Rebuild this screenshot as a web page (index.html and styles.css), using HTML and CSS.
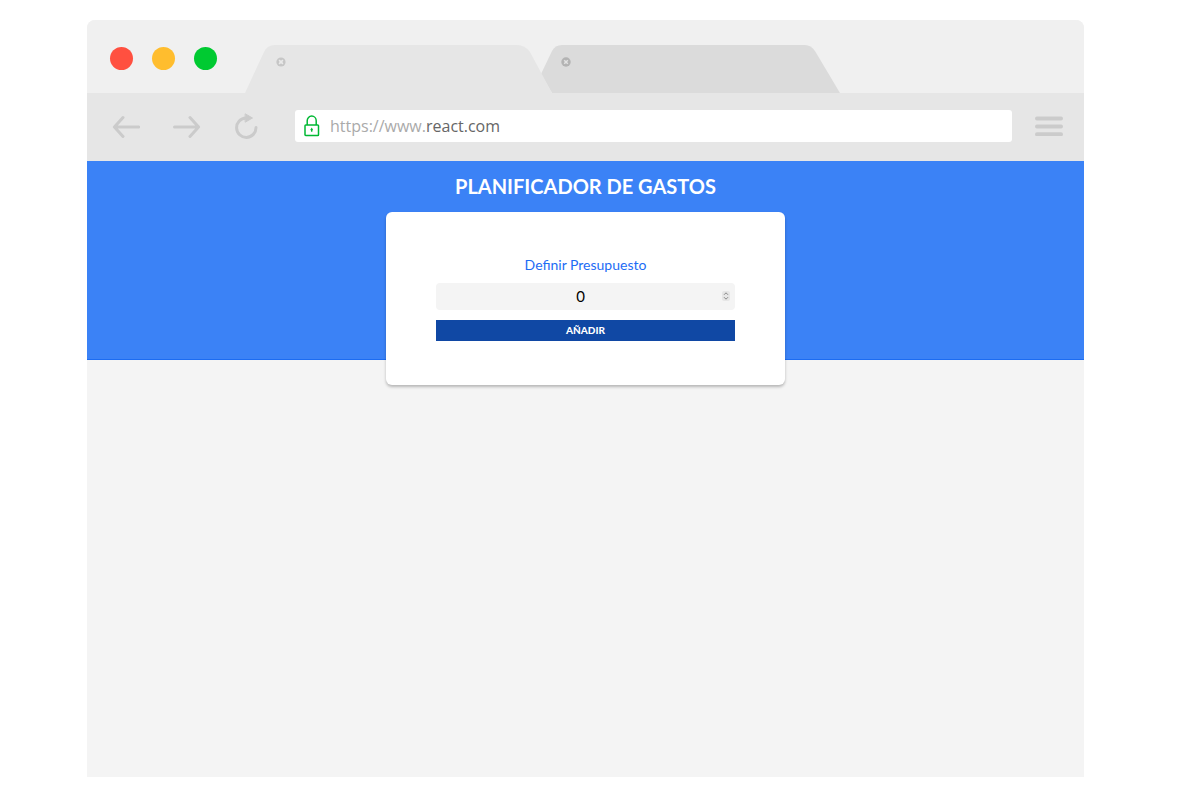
FILE: index.html
```html
<!DOCTYPE html>
<html lang="es">
<head>
<meta charset="utf-8">
<meta name="viewport" content="width=device-width, initial-scale=1">
<title>Planificador de Gastos</title>
<link rel="stylesheet" href="styles.css">
</head>
<body>
<div class="window">
  <div class="titlebar">
    <div class="lights">
      <span class="light light-close"></span>
      <span class="light light-min"></span>
      <span class="light light-max"></span>
    </div>
    <div class="tabs">
      <div class="tab tab-active">
        <svg class="tab-shape" viewBox="0 0 307 48" preserveAspectRatio="none" aria-hidden="true"><path d="M0 48 L19 7 Q22 0 30 0 H272 Q280 0 285 7 L307 48Z"/></svg>
        <button class="tab-close" type="button" aria-label="Cerrar">
          <svg width="10" height="10" viewBox="0 0 10 10" aria-hidden="true"><circle cx="5" cy="5" r="4.6" fill="#c6c6c6"/><path d="M3.1 3.1l3.8 3.8M6.9 3.1L3.1 6.9" stroke="#e9e9e9" stroke-width="1.7"/></svg>
        </button>
      </div>
      <div class="tab tab-idle">
        <svg class="tab-shape" viewBox="0 0 299 48" preserveAspectRatio="none" aria-hidden="true"><path d="M0 29 L11 6 Q14 0 21 0 H264 Q270 0 274 6 L299 48 H11Z"/></svg>
        <button class="tab-close" type="button" aria-label="Cerrar">
          <svg width="10" height="10" viewBox="0 0 10 10" aria-hidden="true"><circle cx="5" cy="5" r="4.7" fill="#b3b3b3"/><path d="M3.2 3.2l3.6 3.6M6.8 3.2L3.2 6.8" stroke="#e2e2e2" stroke-width="1.5"/></svg>
        </button>
      </div>
    </div>
  </div>
  <div class="toolbar">
    <div class="nav">
      <button class="icon-button" type="button" aria-label="Atrás">
        <svg width="28" height="24" viewBox="0 0 28 24" aria-hidden="true"><path d="M26.8 13H2.4M11 3.5L2.400 13l8.600 9.500"/></svg>
      </button>
      <button class="icon-button" type="button" aria-label="Adelante">
        <svg width="28" height="24" viewBox="0 0 28 24" aria-hidden="true"><path d="M1.500 13H25.500M17 3.500l8.600 9.500-8.600 9.500"/></svg>
      </button>
      <button class="icon-button" type="button" aria-label="Recargar">
        <svg width="24" height="26" viewBox="0 0 24 26" aria-hidden="true"><path d="M12 5A9.700 9.700 0 1 0 22 14.500"/><path class="solid" d="M11.500 1L18.500 5l-7 4z"/></svg>
      </button>
    </div>
    <div class="address">
      <svg width="16" height="22" viewBox="0 0 16 22" fill="none" stroke="#00b833" stroke-width="1.5" aria-hidden="true"><rect x="1" y="10" width="13.5" height="10.5" rx=".8"/><path d="M3.2 10V5.8a4.5 4.8 0 0 1 9 0V10"/><path d="M7.7 12.5l1 1.700-.4 2.600H7.100l-.4-2.600z" fill="#00b833" stroke="none"/></svg>
      <a class="url" href="#">https://www.<span class="domain">react.com</span></a>
    </div>
    <button class="icon-button icon-menu" type="button" aria-label="Menú">
      <svg width="28" height="20" viewBox="0 0 28 20" aria-hidden="true"><path d="M2 2.500h24M2 10.500h24M2 18.300h24"/></svg>
    </button>
  </div>
  <main class="page">
    <header class="hero">
      <h1 class="title">Planificador de Gastos</h1>
      <form class="card">
        <label class="label" for="budget">Definir Presupuesto</label>
        <div class="field">
          <input class="amount" id="budget" type="number" value="0">
          <svg class="stepper" width="8" height="10" viewBox="0 0 8 10" aria-hidden="true"><rect width="8" height="10" rx="2" fill="#e6e6e6"/><path d="M2 3.800l2-2 2 2M2 6.200l2 2 2-2" fill="none" stroke="#888" stroke-width="1"/></svg>
        </div>
        <button class="submit" type="submit">Añadir</button>
      </form>
    </header>
  </main>
</div>
</body>
</html>
```
FILE: styles.css
```css
* {
  box-sizing: border-box;
}

body {
  display: flex;
  min-height: 100vh;
  margin: 0;
  padding: 20px 116px 23px 87px;
  background: #fff;
  font-family: Lato, sans-serif;
}

button {
  border: 0;
  padding: 0;
  background: none;
  font-family: inherit;
  cursor: pointer;
}

svg {
  display: block;
}

.window {
  display: flex;
  flex: 1;
  flex-direction: column;
  min-width: 0;
  border-radius: 8px 8px 0 0;
  background: #f4f4f4;
  overflow: hidden;
}

.titlebar {
  display: flex;
  gap: 28px;
  padding: 25px 23px 0;
  background: #f0f0f0;
}

.lights {
  display: flex;
  gap: 19px;
  padding-top: 2px;
}

.light {
  width: 23px;
  height: 23px;
  border-radius: 50%;
}

.light-close {
  background: #ff5040;
}

.light-min {
  background: #ffbd2e;
}

.light-max {
  background: #00ca31;
}

.tabs {
  display: flex;
}

.tab {
  position: relative;
  width: 307px;
  height: 48px;
  padding: 12px 31px;
}

.tab-active {
  z-index: 1;
  fill: #e6e6e6;
}

.tab-idle {
  width: 299px;
  margin-left: -11px;
  padding: 12px 20px;
  fill: #dbdbdb;
}

.tab-shape {
  position: absolute;
  inset: 0;
  width: 100%;
  height: 100%;
}

.tab-close {
  display: block;
  position: relative;
}

.toolbar {
  display: flex;
  align-items: center;
  gap: 23px;
  height: 68px;
  padding: 0 21px 2px 25px;
  background: #e6e6e6;
}

.nav {
  display: flex;
  align-items: center;
  gap: 33px;
  padding-right: 14px;
}

.icon-button {
  fill: none;
  stroke: #cbcbcb;
  stroke-width: 3px;
  stroke-linecap: round;
  stroke-linejoin: round;
}

.icon-menu {
  stroke-width: 4px;
}

.solid {
  fill: #cbcbcb;
  stroke-width: 1px;
}

.address {
  display: flex;
  flex: 1;
  align-items: center;
  gap: 10px;
  height: 32px;
  padding: 0 9px;
  border-radius: 3px;
  background: #fff;
}

.url {
  color: #aaa;
  font: 16px/20px "Open Sans", sans-serif;
  text-decoration: none;
}

.domain {
  color: #666;
}

.page {
  flex: 1;
}

.hero {
  display: flex;
  flex-direction: column;
  align-items: center;
  height: 199px;
  padding-top: 13px;
  border-bottom: 1px solid #1c6cf2;
  background: #3b82f6;
}

.title {
  margin: 0 0 14px;
  color: #fff;
  font-size: 20px;
  font-weight: 700;
  line-height: 24px;
  text-transform: uppercase;
}

.card {
  display: flex;
  flex-direction: column;
  flex-shrink: 0;
  width: 40%;
  padding: 44px 50px;
  border-radius: 6px;
  background: #fff;
  box-shadow: 0 2px 3px rgb(0 0 0 / 25%);
}

.label {
  margin-bottom: 9px;
  color: #1d6cf5;
  font-size: 14px;
  line-height: 18px;
  text-align: center;
}

.field {
  position: relative;
  margin-bottom: 10px;
}

.amount {
  display: block;
  width: 100%;
  height: 27px;
  border: 0;
  border-radius: 4px;
  padding: 0 20px 2px 10px;
  background: #f4f4f4;
  color: #000;
  font: 15px/20px Lato, sans-serif;
  text-align: center;
  appearance: textfield;
}

.amount::-webkit-inner-spin-button {
  display: none;
}

.stepper {
  position: absolute;
  top: 8px;
  right: 5px;
}

.submit {
  height: 21px;
  padding-bottom: 2px;
  background: #1048a4;
  color: #fff;
  font-size: 10px;
  font-weight: 900;
  line-height: 18px;
  text-transform: uppercase;
}
```
